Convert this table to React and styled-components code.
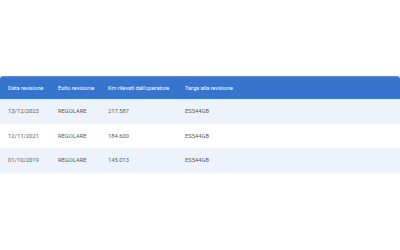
import React from 'react';
import styled, { createGlobalStyle } from 'styled-components';

const GlobalStyle = createGlobalStyle`
  html, body {
    margin: 0;
    padding: 0;
    background: #fff;
  }
  body {
    font-family: Roboto, "Liberation Sans", sans-serif;
  }
`;

const rows = [
  { date: '13/12/2023', esito: 'REGOLARE', km: '217.587', targa: 'ES544GB' },
  { date: '12/11/2021', esito: 'REGOLARE', km: '184.600', targa: 'ES544GB' },
  { date: '01/10/2019', esito: 'REGOLARE', km: '145.013', targa: 'ES544GB' },
];

const App = () => (
  <>
    <GlobalStyle />
    <Page>
      <Table>
        <colgroup>
          <col style={{ width: 50 }} />
          <col style={{ width: 50 }} />
          <col style={{ width: 77 }} />
          <col />
        </colgroup>
        <thead>
          <tr>
            <Th>Data revisione</Th>
            <Th>Esito revisione</Th>
            <Th>Km rilevati dall'operatore</Th>
            <Th>Targa alla revisione</Th>
          </tr>
        </thead>
        <tbody>
          {rows.map((r, i) => (
            <Row key={r.date} $striped={i % 2 === 0}>
              <Td>{r.date}</Td>
              <Td>{r.esito}</Td>
              <Td>{r.km}</Td>
              <Td>{r.targa}</Td>
            </Row>
          ))}
        </tbody>
      </Table>
    </Page>
  </>
);

export default App;

const Page = styled.div`
  padding-top: 76px;
  width: 400px;
`
const Table = styled.table`
  width: 100%;
  table-layout: fixed;
  border-collapse: separate;
  border-spacing: 0;
`
const Th = styled.th`
  height: 23px;
  padding: 0 0 0 8px;
  background: #3674cd;
  border-top: 1px solid #5a8fdc;
  color: #fff;
  font-size: 5.6px;
  font-weight: 400;
  text-align: left;
  white-space: nowrap;
  box-sizing: border-box;
  &:first-child { border-top-left-radius: 3px; }
  &:last-child { border-top-right-radius: 3px; }
`
const Row = styled.tr`
  background: ${({ $striped }) => ($striped ? '#eef3fb' : '#fff')};
`
const Td = styled.td`
  height: 24.5px;
  padding: 0 0 0 8px;
  color: #5c5c5c;
  font-size: 5.8px;
  white-space: nowrap;
  box-sizing: border-box;
`
